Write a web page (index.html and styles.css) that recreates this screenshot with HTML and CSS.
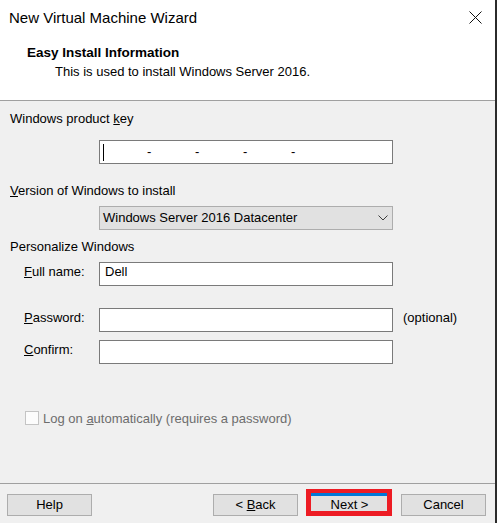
FILE: index.html
```html
<!DOCTYPE html>
<html lang="en">
<head>
<meta charset="utf-8">
<title>New Virtual Machine Wizard</title>
<link rel="stylesheet" href="styles.css">
</head>
<body>
<div class="window">
  <header class="header">
    <div class="titlebar">
      <span class="title">New Virtual Machine Wizard</span>
      <svg class="close" viewBox="0 0 13 13" width="13" height="13"><path d="M0.5 0.5L12.5 12.5M12.5 0.5L0.5 12.5" stroke="#111" stroke-width="1" fill="none"/></svg>
    </div>
    <div class="heading">Easy Install Information</div>
    <div class="subheading">This is used to install Windows Server 2016.</div>
  </header>
  <main class="content">
    <div class="label l-key">Windows product <u>k</u>ey</div>
    <div class="keybox">
      <span class="caret"></span>
      <span class="dash first">-</span><span class="dash">-</span><span class="dash">-</span><span class="dash">-</span>
    </div>
    <div class="label l-version"><u>V</u>ersion of Windows to install</div>
    <div class="select">
      <span>Windows Server 2016 Datacenter</span>
      <svg class="chevron" viewBox="0 0 10 6" width="10" height="6"><polyline points="0.5,0.5 5,5 9.5,0.5" stroke="#3c3c3c" stroke-width="1" fill="none"/></svg>
    </div>
    <div class="label l-personal">Personalize Windows</div>
    <div class="form">
      <div class="row r-name">
        <span class="flabel"><u>F</u>ull name:</span>
        <div class="field">Dell</div>
      </div>
      <div class="row r-pass">
        <span class="flabel"><u>P</u>assword:</span>
        <div class="field"></div>
        <span class="note">(optional)</span>
      </div>
      <div class="row r-confirm">
        <span class="flabel"><u>C</u>onfirm:</span>
        <div class="field"></div>
      </div>
    </div>
    <div class="check">
      <span class="box"></span>
      <span class="check-label">Log on <u>a</u>utomatically (requires a password)</span>
    </div>
  </main>
  <footer class="footer">
    <button class="btn">Help</button>
    <div class="nav">
      <button class="btn">&lt; <u>B</u>ack</button>
      <span class="next-wrap"><button class="btn default">Next &gt;</button></span>
      <button class="btn">Cancel</button>
    </div>
  </footer>
</div>
</body>
</html>
```
FILE: styles.css
```css
* {
  box-sizing: border-box;
  margin: 0;
  padding: 0;
}

html, body {
  background: #f0f0f0;
}

body {
  font: 13px/16px "Liberation Sans", Arial, sans-serif;
  color: #000;
}

.window {
  width: 497px;
  height: 523px;
  border-right: 2px solid #2b2b2b;
  display: flex;
  flex-direction: column;
  background: #f0f0f0;
}

.header {
  background: #fff;
  height: 101px;
  border-bottom: 1px solid #a0a0a0;
  flex: none;
}

.titlebar {
  display: flex;
  justify-content: space-between;
  align-items: flex-start;
  padding: 9px 13px 0 9px;
}

.title {
  font-size: 15px;
  line-height: 18px;
}

.close {
  display: block;
  margin-top: 2px;
}

.heading {
  font-weight: bold;
  font-size: 13.5px;
  margin-top: 18px;
  padding-left: 27px;
}

.subheading {
  margin-top: 3px;
  padding-left: 55px;
}

.content {
  flex: 1;
  padding: 10px 0 0 10px;
  border-bottom: 1px solid #a0a0a0;
}

.label {
  height: 16px;
}

.keybox {
  margin: 13px 0 0 89px;
  width: 294px;
  height: 24px;
  border: 1px solid #7a7a7a;
  background: #fff;
  display: flex;
  align-items: center;
  padding-left: 3px;
}

.caret {
  width: 1px;
  height: 17px;
  background: #000;
}

.dash {
  width: 48px;
}

.dash.first {
  margin-left: 43px;
}

.l-version {
  margin-top: 19px;
}

.select {
  margin: 7px 0 0 89px;
  width: 294px;
  height: 24px;
  border: 1px solid #adadad;
  background: #e1e1e1;
  padding: 3px 4px 0 3px;
  display: flex;
  justify-content: space-between;
  align-items: flex-start;
}

.chevron {
  display: block;
  margin-top: 5px;
}

.l-personal {
  margin-top: 9px;
}

.form {
  padding-left: 14px;
}

.row {
  display: grid;
  grid-template-columns: 65px 294px auto;
  column-gap: 10px;
  align-items: start;
}

.r-name {
  margin-top: 7px;
}

.r-pass {
  margin-top: 22px;
}

.r-confirm {
  margin-top: 8px;
}

.flabel,
.note {
  padding-top: 2px;
}

.field {
  height: 24px;
  border: 1px solid #7a7a7a;
  background: #fff;
  padding: 1px 5px;
}

.check {
  margin-top: 47px;
  padding-left: 15px;
  display: flex;
  align-items: flex-start;
  gap: 4px;
}

.box {
  width: 14px;
  height: 14px;
  border: 1px solid #c4c4c4;
  background: #fcfcfc;
}

.check-label {
  color: #6d6d6d;
}

.footer {
  flex: none;
  height: 39px;
  display: flex;
  justify-content: space-between;
  align-items: flex-start;
  padding: 10px 9px 0 7px;
}

.nav {
  display: flex;
  gap: 9px;
}

.btn {
  width: 85px;
  height: 22px;
  background: #e1e1e1;
  border: 1px solid #adadad;
  font: 13px/16px "Liberation Sans", Arial, sans-serif;
  color: #000;
  text-align: center;
  display: block;
}

.next-wrap {
  position: relative;
  display: block;
}

.btn.default {
  border: 2px solid #0078d7;
  box-shadow: 0 -1px 0 #0078d7;
}

.next-wrap::after {
  content: "";
  position: absolute;
  left: -1px;
  right: 0;
  top: -5px;
  bottom: 0;
  border: 5px solid #ed1c24;
  border-top-width: 4px;
  pointer-events: none;
}
```
